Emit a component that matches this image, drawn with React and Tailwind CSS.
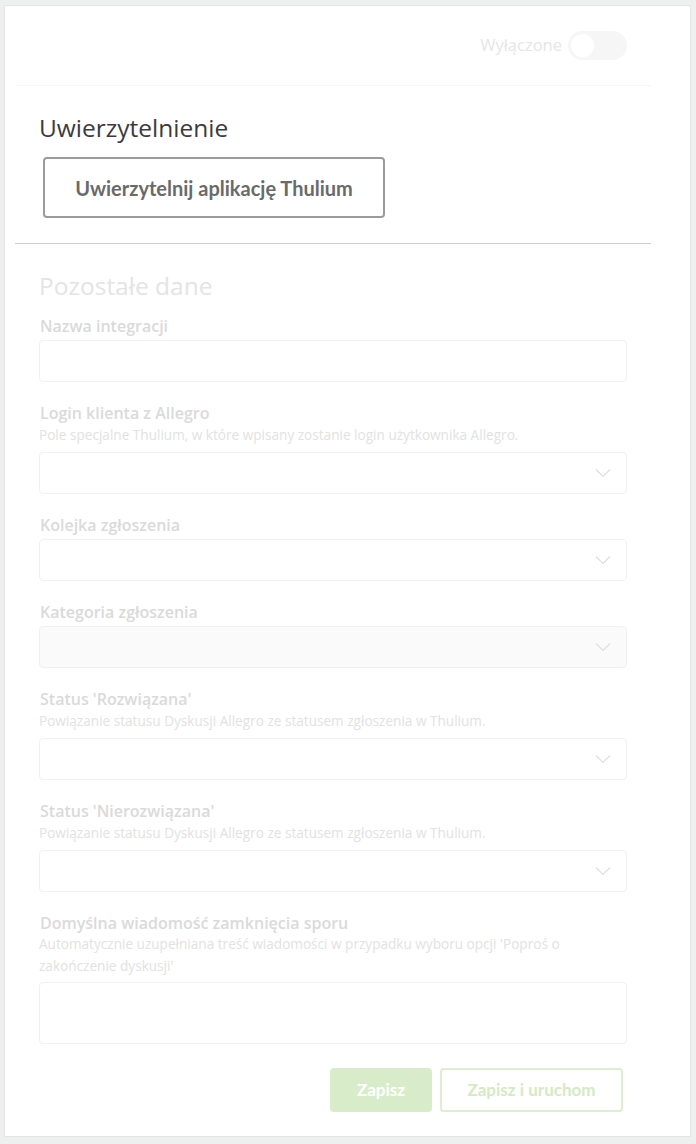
import React from 'react';

const open = { fontFamily: '"Open Sans", "DejaVu Sans", sans-serif' };
const lato = { fontFamily: 'Lato, "Open Sans", sans-serif' };

const Chevron = () => (
  <svg width="16" height="10" viewBox="0 0 16 10" fill="none" className="shrink-0">
    <path d="M1 1.5 L8 8.5 L15 1.5" stroke="#dedede" strokeWidth="1.2" />
  </svg>
);

const Field = ({ label, help, select, disabled, tall }) => (
  <div className="mt-[21px]">
    <div className="pl-[1px] text-[16px] leading-[20px] font-semibold text-[#dadada]" style={open}>{label}</div>
    {help && (
      <div className={`${tall ? 'mt-0' : 'mt-[1px]'} text-[13.6px] leading-[22px] text-[#e2e2e2]`} style={open}>{help}</div>
    )}
    <div
      className={`${tall ? 'mt-[5px] h-[62px]' : help ? 'mt-[6px] h-[42px]' : 'mt-[4px] h-[42px]'} ${disabled ? 'bg-[#fafafa]' : 'bg-white'} border border-[#f1f1f1] rounded-[4px] flex items-center justify-end pr-[15px]`}
    >
      {select && <Chevron />}
    </div>
  </div>
);

export default function App() {
  return (
    <div className="min-h-[1144px] bg-[#eef0ef] pt-[5px] pl-[4px]">
      <div className="w-[687px] h-[1132px] bg-white border border-[#e4e4e4] pl-[10px]">
        <div className="w-[636px]">
          {/* header */}
          <div className="h-[80px] border-b border-[#f4f4f4] flex items-center justify-end pr-[24px] gap-[6px]">
            <span className="text-[16.5px] text-[#e6e6e6]" style={open}>Wyłączone</span>
            <div className="w-[59px] h-[29px] rounded-full bg-[#f6f6f6] p-[3px] flex items-center">
              <div className="w-[23px] h-[23px] rounded-full bg-white"></div>
            </div>
          </div>

          {/* auth */}
          <div className="px-[24px] pt-[26px] pb-[25px] border-b border-[#cfcfcf]">
            <h2 className="text-[24.5px] leading-[32px] text-[#3b3b3b]" style={open}>Uwierzytelnienie</h2>
            <button
              className="mt-[13px] ml-[4px] w-[342px] h-[61px] border-2 border-[#9b9b9b] rounded-[4px] text-[20px] font-bold text-[#6a6a6a]"
              style={lato}
            >
              Uwierzytelnij aplikację Thulium
            </button>
          </div>

          {/* rest */}
          <div className="px-[24px] pt-[26px]">
            <h2 className="text-[24.5px] leading-[32px] text-[#e4e4e4]" style={open}>Pozostałe dane</h2>
            <div className="-mt-[7px]">
              <Field label="Nazwa integracji" />
              <Field
                label="Login klienta z Allegro"
                help="Pole specjalne Thulium, w które wpisany zostanie login użytkownika Allegro."
                select
              />
              <Field label="Kolejka zgłoszenia" select />
              <Field label="Kategoria zgłoszenia" select disabled />
              <Field
                label="Status 'Rozwiązana'"
                help="Powiązanie statusu Dyskusji Allegro ze statusem zgłoszenia w Thulium."
                select
              />
              <Field
                label="Status 'Nierozwiązana'"
                help="Powiązanie statusu Dyskusji Allegro ze statusem zgłoszenia w Thulium."
                select
              />
              <Field
                label="Domyślna wiadomość zamknięcia sporu"
                help="Automatycznie uzupełniana treść wiadomości w przypadku wyboru opcji 'Poproś o zakończenie dyskusji'"
                tall
              />
            </div>
            <div className="mt-[24px] flex justify-end gap-[8px] pr-[4px]">
              <button
                className="w-[102px] h-[44px] rounded-[4px] bg-[#d9ecca] text-white text-[17px] font-bold"
                style={lato}
              >
                Zapisz
              </button>
              <button
                className="w-[183px] h-[44px] rounded-[4px] border-2 border-[#dcefcf] bg-white text-[#d4eac4] text-[17px] font-bold"
                style={lato}
              >
                Zapisz i uruchom
              </button>
            </div>
          </div>
        </div>
      </div>
    </div>
  );
}
